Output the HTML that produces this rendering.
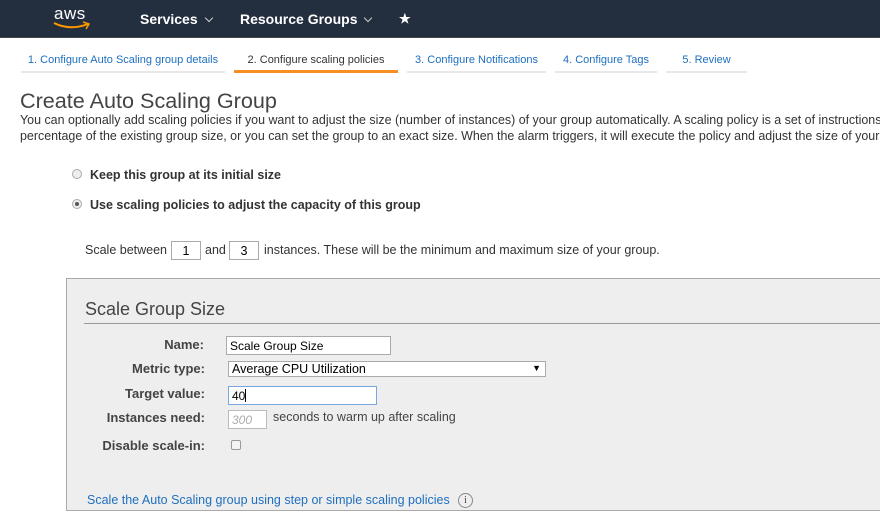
<!DOCTYPE html>
<html><head><style>
*{margin:0;padding:0;box-sizing:border-box}
body{width:880px;height:530px;overflow:hidden;background:#fff;font-family:"Liberation Sans",Arial,sans-serif;color:#333;position:relative}
.a{position:absolute;white-space:nowrap}
.hdr{position:absolute;left:0;top:0;width:880px;height:38px;background:#232f3e;border-bottom:1px solid #444}
.nav{color:#fff;font-weight:bold;font-size:14px}
.tab{position:absolute;top:54px;font-size:11px;color:#1e6fbf;text-align:center;height:19px;border-bottom:2px solid #e8e8e8}
.lbl{font-weight:bold;font-size:13px;color:#444;text-align:right;width:140px}
.inp{position:absolute;border:1px solid #aaa;background:#fff;font-size:12px;padding-left:3px;color:#000}
.chev{display:inline-block;width:6px;height:6px;border-right:1.5px solid #ccc;border-bottom:1.5px solid #ccc;transform:rotate(45deg);margin-left:8px;vertical-align:3px}
</style></head><body>
<div class="hdr">
<div class="a" style="left:54px;top:4px;color:#fff;font-size:17px;letter-spacing:0.5px">aws</div>
<svg class="a" style="left:52px;top:21px" width="40" height="10"><path d="M2 2 Q18 10 36 3" stroke="#f90" stroke-width="2" fill="none"/><path d="M31 1 L37 3 L34 8" stroke="#f90" stroke-width="1.5" fill="none"/></svg>
<div class="a nav" style="left:140px;top:11px">Services<span class="chev"></span></div>
<div class="a nav" style="left:240px;top:11px">Resource Groups<span class="chev"></span></div>
<div class="a nav" style="left:399px;top:11px;font-size:13px">&#9733;</div>
</div>
<div class="tab" style="left:21px;width:204px">1. Configure Auto Scaling group details</div>
<div class="tab" style="left:234px;width:164px;color:#333;border-bottom:3px solid #f7901e">2. Configure scaling policies</div>
<div class="tab" style="left:407px;width:139px">3. Configure Notifications</div>
<div class="tab" style="left:555px;width:102px">4. Configure Tags</div>
<div class="tab" style="left:666px;width:81px">5. Review</div>
<div class="a" style="left:20px;top:88px;font-size:21.6px;color:#444">Create Auto Scaling Group</div>
<div class="a" style="left:20px;top:113px;font-size:12.45px;color:#333">You can optionally add scaling policies if you want to adjust the size (number of instances) of your group automatically. A scaling policy is a set of instructions</div>
<div class="a" style="left:20px;top:129px;font-size:12.45px;color:#333">percentage of the existing group size, or you can set the group to an exact size. When the alarm triggers, it will execute the policy and adjust the size of your</div>
<div class="a" style="left:72px;top:169px;width:10px;height:10px;border:1px solid #aaa;border-radius:50%;background:#eee"></div>
<div class="a" style="left:90px;top:168px;font-size:12.5px;font-weight:bold;color:#333">Keep this group at its initial size</div>
<div class="a" style="left:72px;top:199px;width:10px;height:10px;border:1px solid #aaa;border-radius:50%;background:#eee"><div style="width:4px;height:4px;border-radius:50%;background:#555;margin:2px"></div></div>
<div class="a" style="left:90px;top:198px;font-size:12.5px;font-weight:bold;color:#333">Use scaling policies to adjust the capacity of this group</div>
<div class="a" style="left:85px;top:243px;font-size:12.5px;color:#333">Scale between</div>
<div class="inp" style="left:171px;top:241px;width:30px;height:19px;text-align:center;font-size:12.5px;padding:2px 0 0">1</div>
<div class="a" style="left:205px;top:243px;font-size:12.5px;color:#333">and</div>
<div class="inp" style="left:229px;top:241px;width:30px;height:19px;text-align:center;font-size:12.5px;padding:2px 0 0">3</div>
<div class="a" style="left:264px;top:243px;font-size:12.5px;color:#333">instances. These will be the minimum and maximum size of your group.</div>
<div class="a" style="left:66px;top:278px;width:830px;height:233px;background:#eee;border:1px solid #aaa"></div>
<div class="a" style="left:85px;top:299px;font-size:18px;color:#444">Scale Group Size</div>
<div class="a" style="left:84px;top:323px;width:800px;height:1px;background:#999"></div>
<div class="a lbl" style="left:64px;top:337px">Name:</div>
<div class="inp" style="left:226px;top:336px;width:165px;height:19px;padding-top:2px">Scale Group Size</div>
<div class="a lbl" style="left:65px;top:361px">Metric type:</div>
<div class="inp" style="left:228px;top:361px;width:318px;height:16px;padding-top:0;font-size:12.5px">Average CPU Utilization<span style="position:absolute;right:4px;top:1px;font-size:9px">&#9660;</span></div>
<div class="a lbl" style="left:65px;top:386px">Target value:</div>
<div class="inp" style="left:228px;top:386px;width:149px;height:19px;border:1px solid #7aa7e0;padding-top:2px">40<span style="display:inline-block;width:1px;height:13px;background:#000;vertical-align:-2px"></span></div>
<div class="a lbl" style="left:65px;top:410px">Instances need:</div>
<div class="inp" style="left:228px;top:410px;width:39px;height:19px;border-color:#bbb;color:#aaa;font-style:italic;padding-top:2px">300</div>
<div class="a" style="left:273px;top:410px;font-size:12.5px;color:#444">seconds to warm up after scaling</div>
<div class="a lbl" style="left:65px;top:438px">Disable scale-in:</div>
<div class="a" style="left:231px;top:440px;width:10px;height:10px;border:1px solid #999;border-radius:2px;background:#f4f4f4"></div>
<div class="a" style="left:87px;top:493px;font-size:12.5px;color:#1e6fbf">Scale the Auto Scaling group using step or simple scaling policies</div>
<div class="a" style="left:458px;top:493px;width:15px;height:15px;border:1px solid #888;border-radius:50%;font-size:10px;text-align:center;line-height:13px;color:#444;font-family:'Liberation Serif',serif">i</div>
</body></html>
